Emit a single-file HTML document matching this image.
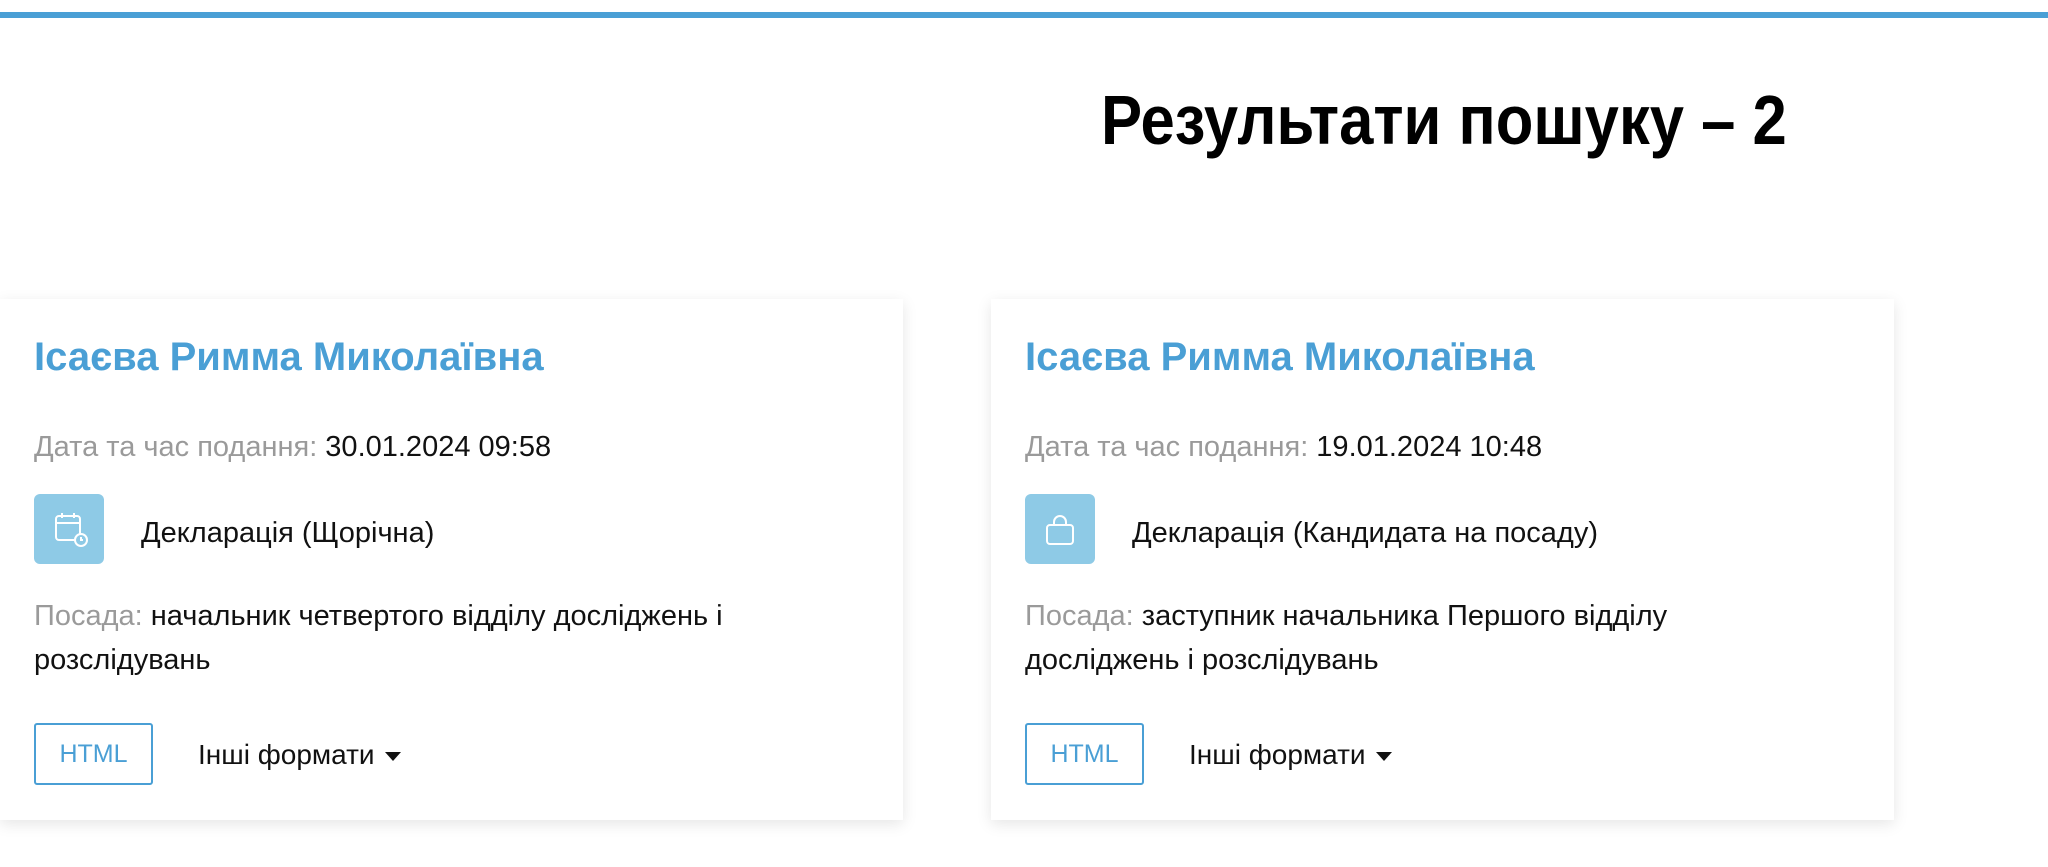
<!DOCTYPE html>
<html><head><meta charset="utf-8"><style>
*{box-sizing:border-box;margin:0;padding:0}
body{width:2048px;height:867px;background:#fff;font-family:"Liberation Sans",sans-serif;position:relative;overflow:hidden;color:#111}
.bar{position:absolute;left:0;top:12px;width:2048px;height:6px;background:#4a9fd5}
h1{position:absolute;left:1101px;top:80px;font-size:70px;font-weight:bold;white-space:nowrap;transform-origin:0 0;transform:scaleX(0.88);color:#000}
.card{position:absolute;top:299px;width:903px;height:521px;background:#fff;box-shadow:0 4px 14px rgba(0,0,0,0.10)}
.name{position:absolute;left:34px;top:36px;font-size:40px;font-weight:bold;color:#4a9fd5;white-space:nowrap}
.row{position:absolute;left:34px;font-size:29px;white-space:nowrap}
.lbl{color:#9a9a9a}
.icon{position:absolute;left:34px;top:195px;width:70px;height:70px;border-radius:6px;background:#8ecae6}
.icon svg{position:absolute;left:0;top:0}
.type{position:absolute;left:141px;top:218px;font-size:29px;white-space:nowrap}
.pos{position:absolute;left:34px;top:295px;font-size:29px;line-height:44px;width:770px}
.btn{position:absolute;left:34px;top:424px;width:119px;height:62px;border:2px solid #4a9fd5;border-radius:3px;color:#4a9fd5;font-size:25px;text-align:center;line-height:58px}
.other{position:absolute;left:198px;top:440px;font-size:28px;white-space:nowrap}
.caret{display:inline-block;width:0;height:0;border-left:8px solid transparent;border-right:8px solid transparent;border-top:9px solid #111;vertical-align:middle;margin-left:10px}
</style></head><body>
<div class="bar"></div>
<h1>Результати пошуку – 2</h1>

<div class="card" style="left:0">
  <div class="name">Ісаєва Римма Миколаївна</div>
  <div class="row" style="top:132px"><span class="lbl">Дата та час подання:</span> 30.01.2024 09:58</div>
  <div class="icon"><svg width="70" height="70" viewBox="0 0 70 70" fill="none" stroke="#fff" stroke-width="2"><rect x="22" y="22" width="24" height="24" rx="3"/><line x1="22" y1="29" x2="46" y2="29"/><line x1="28" y1="19" x2="28" y2="24"/><line x1="40" y1="19" x2="40" y2="24"/><circle cx="47" cy="46" r="6" fill="#8ecae6"/><path d="M47 43v3h2"/></svg></div>
  <div class="type">Декларація (Щорічна)</div>
  <div class="pos"><span class="lbl">Посада:</span> начальник четвертого відділу досліджень і розслідувань</div>
  <div class="btn">HTML</div>
  <div class="other">Інші формати<span class="caret"></span></div>
</div>

<div class="card" style="left:991px">
  <div class="name">Ісаєва Римма Миколаївна</div>
  <div class="row" style="top:132px"><span class="lbl">Дата та час подання:</span> 19.01.2024 10:48</div>
  <div class="icon"><svg width="70" height="70" viewBox="0 0 70 70" fill="none" stroke="#fff" stroke-width="2"><rect x="22" y="31" width="26" height="19" rx="3"/><path d="M29 31v-3a6 6 0 0 1 12 0v3"/></svg></div>
  <div class="type">Декларація (Кандидата на посаду)</div>
  <div class="pos"><span class="lbl">Посада:</span> заступник начальника Першого відділу досліджень і розслідувань</div>
  <div class="btn">HTML</div>
  <div class="other">Інші формати<span class="caret"></span></div>
</div>
</body></html>
